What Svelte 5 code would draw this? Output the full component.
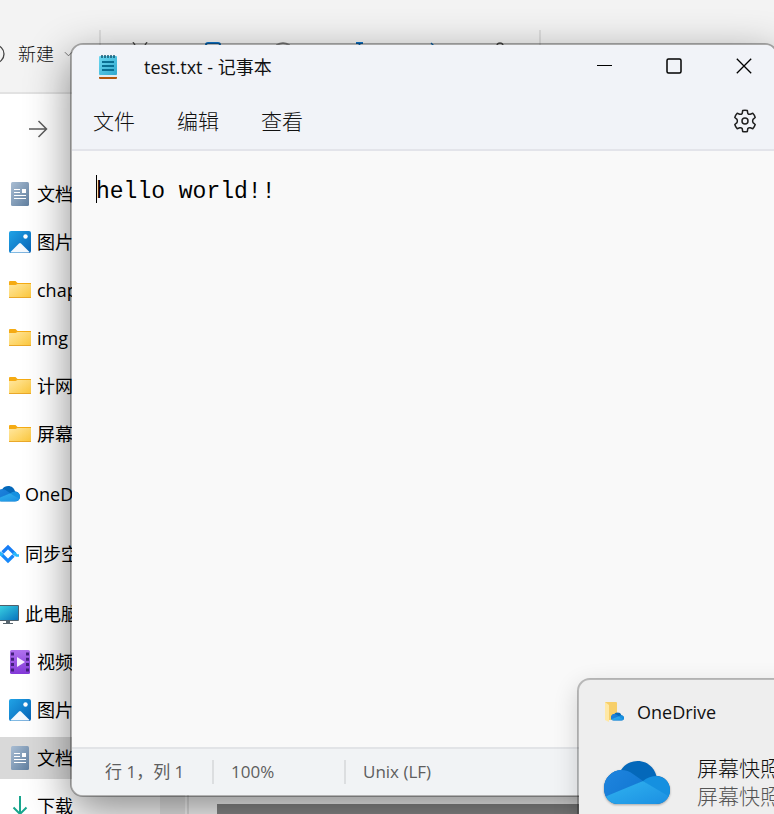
<script>
  const tools = ['cut', 'copy', 'paste', 'rename', 'share', 'trash'];
  const groups = [
    {
      nested: true,
      items: [
        { icon: 'doc', label: '文档' },
        { icon: 'picture', label: '图片' },
        { icon: 'folder', label: 'chap' },
        { icon: 'folder', label: 'img' },
        { icon: 'folder', label: '计网' },
        { icon: 'folder', label: '屏幕' }
      ]
    },
    { items: [{ icon: 'cloud', label: 'OneDrive' }] },
    { items: [{ icon: 'sync', label: '同步空间' }] },
    {
      items: [
        { icon: 'pc', label: '此电脑' },
        { icon: 'video', label: '视频', nested: true },
        { icon: 'picture', label: '图片', nested: true },
        { icon: 'doc', label: '文档', nested: true, selected: true },
        { icon: 'download', label: '下载', nested: true }
      ]
    }
  ];
  let content = $state('hello world!!');
</script>

{#snippet cloud(id)}
  <defs>
    <linearGradient id="{id}-l" x1="0" y1="0" x2="1" y2="1"><stop offset="0" stop-color="#2187e0" /><stop offset="1" stop-color="#0f74d0" /></linearGradient>
    <linearGradient id="{id}-b" x1="0" y1="0" x2="1" y2="1"><stop offset="0" stop-color="#31b4f0" /><stop offset="1" stop-color="#1b8fe2" /></linearGradient>
    <clipPath id="{id}-c"><path d="M14 43C6 43 0 37 0 27C0 17 8 9.500 17 9C21 3 27 0 33.500 0C43 0 50 6 52.500 15C60 15 66 21 66 29C66 37 60 43 52 43Z" /></clipPath>
  </defs>
  <g clip-path="url(#{id}-c)">
    <rect width="66" height="43" fill="#0468ba" />
    <path d="M0 0L17 9Q24 9 29 13L39 20L20 29L2 37L0 43Z" fill="url(#{id}-l)" />
    <path d="M39 20Q45 15 53 15Q62 16 66 24V36H62Z" fill="#1590e0" />
    <path d="M0 37L4 34.500L39 20L64 35L66 43H0Z" fill="url(#{id}-b)" />
  </g>
{/snippet}

{#snippet glyph(name, id)}
  {#if name === 'doc'}
    <svg class="icon" viewBox="0 0 24 24" aria-hidden="true">
      <defs><linearGradient id={id} x1="0" y1="0" x2="1" y2="1"><stop offset="0" stop-color="#a9bdd3" /><stop offset="1" stop-color="#607f9f" /></linearGradient></defs>
      <rect x="3" y="0" width="18" height="24" rx="1.500" fill="url(#{id})" />
      <path d="M6 7.500H12M6 10.500H12M6 13.500H18M6 16.500H18" stroke="#fff" stroke-width="1.200" />
      <rect x="14" y="7" width="4" height="4" fill="#fff" />
    </svg>
  {:else if name === 'picture'}
    <svg class="icon" viewBox="0 0 24 24" aria-hidden="true">
      <defs><linearGradient id={id} x1="0" y1="0" x2="1" y2="1"><stop offset="0" stop-color="#20a3e6" /><stop offset="1" stop-color="#0763b7" /></linearGradient></defs>
      <rect x="1" y="1" width="22" height="22" rx="2" fill="url(#{id})" />
      <path d="M2.500 22L11 13.500Q12 12.500 13 13.500L21.500 22Q21 22.500 20 22.500H4Q3 22.500 2.500 22Z" fill="#f4f9fe" />
      <circle cx="17.500" cy="6.500" r="2.200" fill="#fff" />
    </svg>
  {:else if name === 'folder'}
    <svg class="icon" viewBox="0 0 24 24" aria-hidden="true">
      <defs><linearGradient id={id} x1="0" y1="0" x2="1" y2="1"><stop offset="0" stop-color="#ffe7a0" /><stop offset="1" stop-color="#fcc73b" /></linearGradient></defs>
      <path d="M1 4Q1 3 2 3H7.500L9.500 5H23V12H1Z" fill="#f5ab13" />
      <path d="M1 7H7.500L9.500 6H23V20H1Z" fill="url(#{id})" />
      <path d="M1 19.500H23" stroke="#eaa829" />
    </svg>
  {:else if name === 'cloud'}
    <svg class="icon" viewBox="0 -11 66 66" aria-hidden="true">{@render cloud(id)}</svg>
  {:else if name === 'sync'}
    <svg class="icon" viewBox="0 0 24 24" aria-hidden="true" fill="none" stroke-width="3.200">
      <path d="M6.500 10.500L12 5L19.500 12.500" stroke="#167df5" />
      <path d="M17.500 13.500L12 19L4.500 11.500" stroke="#1688fa" />
      <path d="M17.500 10.500L20.500 13.500H23M6.500 13.500L3.500 10.500H1" stroke="#27b9fb" stroke-width="2.600" />
    </svg>
  {:else if name === 'pc'}
    <svg class="icon" viewBox="0 0 24 24" aria-hidden="true">
      <defs><linearGradient id={id} x1="0" y1="0" x2="1" y2="1"><stop offset="0" stop-color="#3cd6e4" /><stop offset="1" stop-color="#0874be" /></linearGradient></defs>
      <rect x="0" y="3" width="23" height="16" rx="1" fill="#50606c" />
      <rect x="1" y="4" width="21" height="14" fill="url(#{id})" />
      <path d="M10 19H14V21H17V22H7V21H10Z" fill="#58656e" />
    </svg>
  {:else if name === 'video'}
    <svg class="icon" viewBox="0 0 24 24" aria-hidden="true">
      <defs><linearGradient id={id} x1="0" y1="0" x2="0" y2="1"><stop offset="0" stop-color="#b172ef" /><stop offset="1" stop-color="#8338d8" /></linearGradient></defs>
      <rect x="2" y="0" width="20" height="24" rx="1.500" fill="url(#{id})" />
      <path d="M4.500 2.500V22M19.500 2.500V22" stroke="#43207c" stroke-width="3" stroke-dasharray="3 2.300" />
      <path d="M9 7L17 12L9 17Z" fill="#f6edff" />
    </svg>
  {:else}
    <svg class="icon" viewBox="0 0 24 24" aria-hidden="true" fill="none" stroke="#18a58d" stroke-width="2">
      <path d="M12 2V20M5.500 13.500L12 20L18.500 13.500" />
    </svg>
  {/if}
{/snippet}

<div class="desktop">
  <main class="explorer">
    <header class="toolbar">
      <button class="new">
        <svg class="plus" viewBox="0 0 20 20" aria-hidden="true" fill="none" stroke="#444" stroke-width="1.300"><circle cx="10" cy="10" r="9" /><path d="M10 5V15M5 10H15" /></svg>
        新建
        <svg class="chevron" viewBox="0 0 10 10" aria-hidden="true" fill="none" stroke="#666"><path d="M1 3L5 7L9 3" /></svg>
      </button>
      <span class="rule"></span>
      <div class="tools">
        {#each tools as tool}
          <button aria-label={tool}>
            <svg class="icon" viewBox="0 0 24 24" aria-hidden="true" fill="none" stroke-width="1.400">
              {#if tool === 'cut'}<path d="M5 0L16 18M19 0L8 18" stroke="#555" /><circle cx="6" cy="20" r="3" stroke="#1277c8" /><circle cx="18" cy="20" r="3" stroke="#1277c8" />
              {:else if tool === 'copy'}<rect x="6" y="1" width="14" height="18" rx="2" stroke="#0e74c8" stroke-width="2" />
              {:else if tool === 'paste'}<path d="M5 3Q11 -1 17 3V22H5Z" stroke="#999" stroke-width="2" />
              {:else if tool === 'rename'}<path d="M12 1H19M15.500 1V22M12 22H19" stroke="#0e74c8" stroke-width="1.800" />
              {:else if tool === 'share'}<path d="M15 1L22 8L15 15M21 8Q8 8 6 19" stroke="#0e74c8" />
              {:else}<path d="M2 4H22M9 4Q9 1 12 1T15 4M4 4L6 22H18L20 4" stroke="#555" />{/if}
            </svg>
          </button>
        {/each}
      </div>
      <span class="rule"></span>
    </header>
    <div class="address">
      <button aria-label="前进">
        <svg class="icon" viewBox="0 0 24 24" aria-hidden="true" fill="none" stroke="#5c5c5c" stroke-width="1.500"><path d="M3 12H20M12.500 4L20.500 12L12.500 20" /></svg>
      </button>
    </div>
    <div class="body">
      <nav class="sidebar">
        {#each groups as group, g}
          <ul>
            {#each group.items as item, i}
              <li>
                <a href="#item-{g}-{i}" class:nested={group.nested || item.nested} class:selected={item.selected}>
                  {@render glyph(item.icon, `g${g}-${i}`)}
                  <span>{item.label}</span>
                </a>
              </li>
            {/each}
          </ul>
        {/each}
      </nav>
      <div class="scroll"></div>
      <section class="files"><div class="preview"></div></section>
    </div>
  </main>

  <section class="notepad">
    <header class="titlebar">
      <svg class="app" viewBox="0 0 20 26" aria-hidden="true">
        <defs><linearGradient id="pad" x1="0" y1="0" x2="1" y2="1"><stop offset="0" stop-color="#6bd8f1" /><stop offset="1" stop-color="#32a9ce" /></linearGradient></defs>
        <rect x="1" y="21" width="18" height="4" rx="1" fill="#b3560b" />
        <rect x="1" y="20" width="18" height="3" fill="#e4edf1" />
        <rect x="1" y="2" width="18" height="19" rx="1" fill="url(#pad)" />
        <path d="M4 1V4M7 1V4M10 1V4M13 1V4M16 1V4" stroke="#12566f" stroke-width="1.500" />
        <path d="M4 8H16M4 12H16M4 16H16" stroke="#096f93" stroke-width="2" />
      </svg>
      <h1>test.txt - 记事本</h1>
      <div class="controls">
        <button aria-label="最小化"><svg viewBox="0 0 16 16" aria-hidden="true"><path d="M1 7.500H16" /></svg></button>
        <button aria-label="最大化"><svg viewBox="0 0 16 16" aria-hidden="true"><rect x="1" y="1" width="14" height="14" rx="1.500" stroke-width="1.500" /></svg></button>
        <button aria-label="关闭"><svg viewBox="0 0 16 16" aria-hidden="true"><path d="M.8 .8L15.200 15.200M15.200 .8L.8 15.200" stroke-width="1.300" /></svg></button>
      </div>
    </header>
    <div class="menubar">
      <button>文件</button>
      <button>编辑</button>
      <button>查看</button>
      <button class="gear" aria-label="设置">
        <svg class="icon" viewBox="0 0 24 24" aria-hidden="true" fill="none" stroke="#202020" stroke-width="1.500" stroke-linejoin="round">
          <path d="M9.700 1.500Q12 1 14.300 1.500L14.800 4.400Q15.800 5.600 17.300 5.200L19.800 4.300Q21.500 6 22.200 8.500L20 10.400Q19.200 12 20 13.600L22.200 15.500Q21.500 18 19.800 19.700L17.300 18.800Q15.800 18.400 14.800 19.600L14.300 22.500Q12 23 9.700 22.500L9.200 19.600Q8.200 18.400 6.700 18.800L4.200 19.700Q2.500 18 1.800 15.500L4 13.600Q4.800 12 4 10.400L1.800 8.500Q2.500 6 4.200 4.300L6.700 5.200Q8.200 5.600 9.200 4.400Z" />
          <circle cx="12" cy="12" r="3" />
        </svg>
      </button>
    </div>
    <div class="editor">
      <textarea aria-label="文本编辑器" spellcheck="false" bind:value={content}></textarea>
      <span class="caret"></span>
    </div>
    <footer class="status">
      <span class="position">行 1，列 1</span>
      <span class="zoom">100%</span>
      <span>Unix (LF)</span>
    </footer>
  </section>

  <aside class="toast">
    <header>
      <svg class="source" viewBox="0 0 20 20" aria-hidden="true">
        <path d="M1 0H12Q13 0 13 1V18H1Z" fill="#f7cf69" />
        <path d="M1 0L5 3V20L1 18Z" fill="#ffe8a5" />
        <svg x="7" y="10" width="13" height="9" viewBox="0 0 66 43">{@render cloud('small')}</svg>
      </svg>
      OneDrive
    </header>
    <div class="message">
      <svg class="logo" viewBox="0 0 66 43" aria-hidden="true">{@render cloud('large')}</svg>
      <div>
        <p>屏幕快照</p>
        <p class="detail">屏幕快照</p>
      </div>
    </div>
  </aside>
</div>

<style>
  :global(body) { margin: 0; }
  .desktop {
    position: relative;
    height: 100vh;
    overflow: hidden;
    font: 18px/24px 'Open Sans', 'Noto Sans CJK SC', sans-serif;
    color: #111;
  }
  .desktop * { box-sizing: border-box; }
  button { border: 0; padding: 0; background: none; color: inherit; font: inherit; }
  svg { display: block; flex: none; }
  .icon { width: 24px; height: 24px; }

  .explorer { display: flex; flex-direction: column; height: 100%; background: #fff; }
  .toolbar { display: flex; flex: none; align-items: flex-start; height: 94px; padding-top: 30px; background: #f3f3f3; border-bottom: 2px solid #e2e2e2; }
  .new { display: flex; align-items: center; gap: 10px; width: 114px; height: 48px; margin-left: -15px; white-space: nowrap; font-weight: 300; }
  .plus { width: 20px; height: 20px; margin-right: 3px; }
  .chevron { width: 9px; height: 10px; }
  .rule { width: 2px; height: 48px; background: #dedede; }
  .tools { display: flex; gap: 48px; padding: 12px 27px; }
  .address { display: flex; flex: none; align-items: center; height: 70px; padding-left: 26px; }
  .body { display: flex; flex: 1; min-height: 0; }
  .sidebar { width: 160px; overflow: hidden; padding-top: 9px; }
  ul { list-style: none; margin: 0 0 18px; padding: 0; display: flex; flex-direction: column; gap: 6px; }
  li { height: 42px; }
  .sidebar a { display: flex; align-items: center; gap: 5px; height: 42px; margin-left: -4px; color: #000; text-decoration: none; white-space: nowrap; }
  .sidebar a.nested { margin-left: 0; padding-left: 8px; }
  .sidebar a.selected { background: #d9d9d9; }
  .scroll { width: 27px; background: #ededed; border-right: 2px solid #fff; }
  .files { display: flex; flex: 1; align-items: flex-end; padding-left: 28px; border-left: 2px solid #e5e5e5; }
  .preview { width: 100%; height: 10px; background: #8c8c8c; }

  .notepad {
    position: absolute;
    inset: 43px -4px 17px 70px;
    display: flex;
    flex-direction: column;
    overflow: hidden;
    border: 2px solid rgba(0, 0, 0, 0.3);
    border-radius: 13px;
    background: #f9f9f9;
    background-clip: padding-box;
    box-shadow: 0 14px 44px rgba(0, 0, 0, 0.46);
  }
  .titlebar { display: flex; flex: none; align-items: center; height: 44px; padding-left: 26px; background: #f1f3f8; }
  .app { width: 20px; height: 26px; }
  h1 { flex: 1; margin: 0 0 0 26px; font: inherit; }
  .controls { display: flex; align-self: flex-start; padding-right: 8px; }
  .controls button { display: grid; place-items: center; width: 48px; height: 42px; margin-left: 22px; }
  .controls svg { width: 16px; height: 16px; fill: none; stroke: #000; stroke-width: 1; }
  .menubar { display: flex; flex: none; align-items: center; gap: 42px; height: 62px; padding: 4px 19px 0 21px; font-size: 21px; font-weight: 300; background: #f1f3f8; border-bottom: 2px solid #e3e4ea; }
  .gear { margin-left: auto; }
  .editor { position: relative; display: flex; flex: 1; }
  textarea { flex: 1; padding: 27px 24px; border: 0; outline: 0; resize: none; background: none; color: #000; font: 23px/28px 'Liberation Mono', 'Noto Sans CJK SC', monospace; }
  .caret { position: absolute; left: 24px; top: 24px; width: 1px; height: 28px; background: #000; }
  .status { display: flex; flex: none; align-items: center; height: 48px; padding-left: 33px; background: #f1f3f5; border-top: 2px solid #e2e4e7; color: #5e5e5e; font-size: 17px; }
  .position, .zoom { border-right: 2px solid #dcdee0; margin-right: 17px; white-space: nowrap; }
  .position { width: 109px; }
  .zoom { width: 115px; }

  .toast {
    position: absolute;
    left: 577px;
    top: 678px;
    width: 540px;
    height: 220px;
    padding: 20px 25px;
    border: 2px solid rgba(0, 0, 0, 0.25);
    border-radius: 13px;
    background: #eee;
    background-clip: padding-box;
    box-shadow: 0 8px 24px rgba(0, 0, 0, 0.16);
  }
  .toast header { display: flex; align-items: center; gap: 13px; }
  .source { width: 20px; height: 20px; }
  .message { display: flex; align-items: center; gap: 27px; margin-top: 30px; font-size: 21px; font-weight: 300; line-height: 28px; }
  .logo { width: 66px; height: 43px; filter: drop-shadow(0 1px 1px rgba(0, 0, 0, 0.3)); }
  p { margin: 0; white-space: nowrap; }
  .detail { color: #555; }
</style>
